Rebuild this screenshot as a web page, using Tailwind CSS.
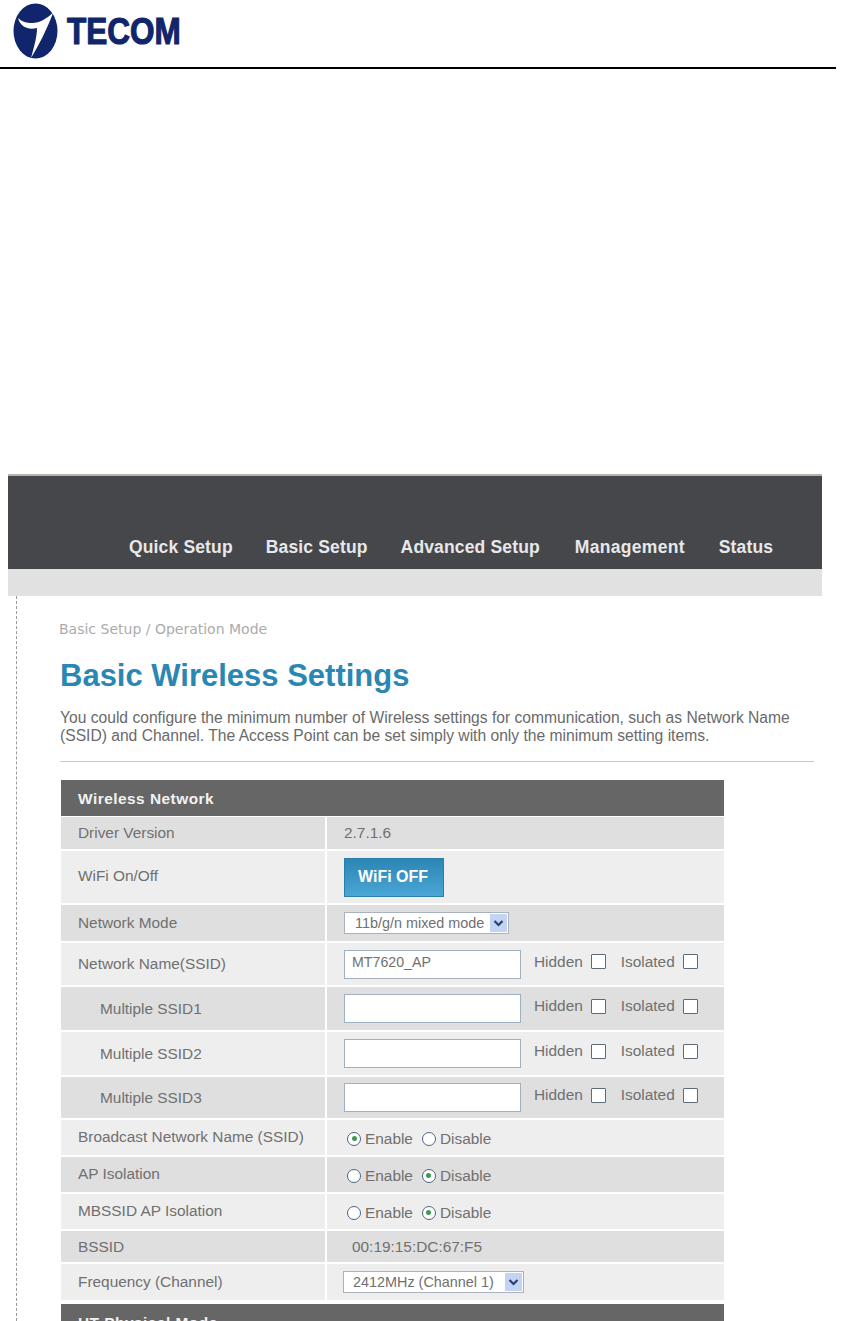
<!DOCTYPE html>
<html lang="en">
<head>
<meta charset="UTF-8">
<meta name="viewport" content="width=device-width,initial-scale=1">
<title>Basic Wireless Settings</title>
<script src="https://cdn.jsdelivr.net/npm/@tailwindcss/browser@4"></script>
</head>
<body class="bg-white font-['Liberation_Sans',Arial,sans-serif] text-[#707070] h-[1321px] overflow-hidden">

<!-- document header -->
<div class="h-[69px] w-[836px] border-b-2 border-black flex items-start">
  <svg class="ml-[13px] mt-[3px] w-[45px] h-[56px]" viewBox="0 0 45 56">
    <ellipse cx="22.5" cy="28" rx="22" ry="27.5" fill="#10256b"/>
    <path d="M5 15C9 19 14 20 19 20C27 20 34 15 40 10C34 26 26 42 18 55C21 44 24 34 24 25C16 27 8 25 5 15Z" fill="#fff"/>
  </svg>
  <span class="ml-[9px] mt-[12px] text-[31.5px] leading-[38px] font-bold text-[#10256b] scale-y-[1.15] [-webkit-text-stroke:1px_#10256b]">TECOM</span>
</div>

<!-- screenshot of router page -->
<div class="mt-[405px] ml-2 w-[814px]">
  <div class="h-[95px] bg-[#45474b] border-t-2 border-[#b5b3a5] flex items-end pb-[11px] pl-[121px] gap-[33px] text-[#e8e8ea] font-bold text-[17.5px] tracking-[0.15px] leading-[22px]">
    <span>Quick Setup</span>
    <span>Basic Setup</span>
    <span>Advanced Setup</span>
    <span class="ml-[2px] tracking-[0.3px]">Management</span>
    <span class="ml-px">Status</span>
  </div>
  <div class="h-[27px] bg-[#e1e1e1]"></div>

  <div class="border-l border-dashed border-[#9a9a9a] ml-2 pl-[42px] h-[725px] w-[806px]">
    <div class="pt-[25px] font-['DejaVu_Sans',sans-serif] text-[14px] leading-4 text-[#ababab]">Basic Setup / Operation Mode</div>
    <h1 class="mt-[21px] ml-px font-bold text-[31px] leading-[36px] text-[#2a87b4]">Basic Wireless Settings</h1>
    <p class="mt-[15px] ml-px text-[15.64px] leading-[18px] text-[#6a6a6a] w-[750px]">You could configure the minimum number of Wireless settings for communication, such as Network Name (SSID) and Channel. The Access Point can be set simply with only the minimum setting items.</p>
    <div class="mt-[16px] ml-px h-px bg-[#c9c9c9] w-[754px]"></div>

    <div class="mt-[18px] ml-[2px] w-[663px] grid grid-cols-[264px_397px] gap-x-[2px] text-[15.4px] leading-[18px]">
      <div class="col-span-2 h-[36px] bg-[#666666] text-[#f2f2f2] font-bold tracking-[0.5px] pl-[17px] pt-[2px] flex items-center">Wireless Network</div>

      <div class="mt-px h-[32px] bg-[#dfdfdf] pl-[17px] flex items-center">Driver Version</div>
      <div class="mt-px h-[32px] bg-[#dfdfdf] pl-[17px] flex items-center">2.7.1.6</div>

      <div class="mt-[2px] h-[52px] bg-[#eeeeee] pl-[17px] flex items-center pb-[2px]">WiFi On/Off</div>
      <div class="mt-[2px] h-[52px] bg-[#eeeeee] pl-[17px] flex items-center">
        <div class="w-[100px] h-[39px] bg-gradient-to-b from-[#2b86b5] to-[#4aa6d6] border border-[#2a7ea8] text-white font-bold text-[16px] pr-[2px] flex items-center justify-center">WiFi OFF</div>
      </div>

      <div class="mt-[2px] h-[36px] bg-[#dfdfdf] pl-[17px] flex items-center">Network Mode</div>
      <div class="mt-[2px] h-[36px] bg-[#dfdfdf] pl-[17px] flex items-center">
        <div class="w-[165px] h-[22px] bg-white border border-[#a9b2bd] flex items-center justify-between pl-[10px] pr-px text-[14.4px]">11b/g/n mixed mode
          <svg class="w-[17px] h-[18px]" viewBox="0 0 17 18"><rect width="17" height="18" fill="#c3d3f3"/><path d="M4.5 7l4 4 4-4" fill="none" stroke="#2a3f78" stroke-width="2.2"/></svg>
        </div>
      </div>

      <div class="mt-[2px] h-[42px] bg-[#eeeeee] pl-[17px] flex items-center">Network Name(SSID)</div>
      <div class="mt-[2px] h-[42px] bg-[#eeeeee] pl-[17px] flex items-center">
        <div class="w-[177px] h-[29px] bg-white border border-[#9fb0c0] pl-[7px] pb-[4px] flex items-center text-[14.2px]">MT7620_AP</div>
        <span class="ml-[13px] -mt-[5px]">Hidden</span><span class="ml-[8px] -mt-[5px] w-[15px] h-[15px] border border-[#5d6a78] rounded-[1px] bg-white"></span>
        <span class="ml-[15px] -mt-[5px]">Isolated</span><span class="ml-[8px] -mt-[5px] w-[15px] h-[15px] border border-[#5d6a78] rounded-[1px] bg-white"></span>
      </div>

      <div class="mt-[2px] h-[43px] bg-[#dfdfdf] pl-[39px] flex items-center">Multiple SSID1</div>
      <div class="mt-[2px] h-[43px] bg-[#dfdfdf] pl-[17px] flex items-center">
        <div class="w-[177px] h-[29px] bg-white border border-[#9fb0c0]"></div>
        <span class="ml-[13px] -mt-[5px]">Hidden</span><span class="ml-[8px] -mt-[5px] w-[15px] h-[15px] border border-[#5d6a78] rounded-[1px] bg-white"></span>
        <span class="ml-[15px] -mt-[5px]">Isolated</span><span class="ml-[8px] -mt-[5px] w-[15px] h-[15px] border border-[#5d6a78] rounded-[1px] bg-white"></span>
      </div>

      <div class="mt-[2px] h-[43px] bg-[#eeeeee] pl-[39px] flex items-center">Multiple SSID2</div>
      <div class="mt-[2px] h-[43px] bg-[#eeeeee] pl-[17px] flex items-center">
        <div class="w-[177px] h-[29px] bg-white border border-[#9fb0c0]"></div>
        <span class="ml-[13px] -mt-[5px]">Hidden</span><span class="ml-[8px] -mt-[5px] w-[15px] h-[15px] border border-[#5d6a78] rounded-[1px] bg-white"></span>
        <span class="ml-[15px] -mt-[5px]">Isolated</span><span class="ml-[8px] -mt-[5px] w-[15px] h-[15px] border border-[#5d6a78] rounded-[1px] bg-white"></span>
      </div>

      <div class="mt-[2px] h-[41px] bg-[#dfdfdf] pl-[39px] flex items-center">Multiple SSID3</div>
      <div class="mt-[2px] h-[41px] bg-[#dfdfdf] pl-[17px] flex items-center">
        <div class="w-[177px] h-[29px] bg-white border border-[#9fb0c0]"></div>
        <span class="ml-[13px] -mt-[5px]">Hidden</span><span class="ml-[8px] -mt-[5px] w-[15px] h-[15px] border border-[#5d6a78] rounded-[1px] bg-white"></span>
        <span class="ml-[15px] -mt-[5px]">Isolated</span><span class="ml-[8px] -mt-[5px] w-[15px] h-[15px] border border-[#5d6a78] rounded-[1px] bg-white"></span>
      </div>

      <div class="mt-[2px] h-[35px] bg-[#eeeeee] pl-[17px] flex items-center pb-[1px]">Broadcast Network Name (SSID)</div>
      <div class="mt-[2px] h-[35px] bg-[#eeeeee] pl-[20px] flex items-center pt-[2px]">
        <span class="w-[14px] h-[14px] rounded-full border border-[#4f6480] bg-white flex items-center justify-center"><span class="w-[5px] h-[5px] rounded-full bg-[#3f9a4e]"></span></span><span class="ml-[4px]">Enable</span>
        <span class="ml-[9px] w-[14px] h-[14px] rounded-full border border-[#4f6480] bg-white"></span><span class="ml-[4px]">Disable</span>
      </div>

      <div class="mt-[2px] h-[35px] bg-[#dfdfdf] pl-[17px] flex items-center pb-[1px]">AP Isolation</div>
      <div class="mt-[2px] h-[35px] bg-[#dfdfdf] pl-[20px] flex items-center pt-[2px]">
        <span class="w-[14px] h-[14px] rounded-full border border-[#4f6480] bg-white"></span><span class="ml-[4px]">Enable</span>
        <span class="ml-[9px] w-[14px] h-[14px] rounded-full border border-[#4f6480] bg-white flex items-center justify-center"><span class="w-[5px] h-[5px] rounded-full bg-[#3f9a4e]"></span></span><span class="ml-[4px]">Disable</span>
      </div>

      <div class="mt-[2px] h-[35px] bg-[#eeeeee] pl-[17px] flex items-center pb-[1px]">MBSSID AP Isolation</div>
      <div class="mt-[2px] h-[35px] bg-[#eeeeee] pl-[20px] flex items-center pt-[2px]">
        <span class="w-[14px] h-[14px] rounded-full border border-[#4f6480] bg-white"></span><span class="ml-[4px]">Enable</span>
        <span class="ml-[9px] w-[14px] h-[14px] rounded-full border border-[#4f6480] bg-white flex items-center justify-center"><span class="w-[5px] h-[5px] rounded-full bg-[#3f9a4e]"></span></span><span class="ml-[4px]">Disable</span>
      </div>

      <div class="mt-[2px] h-[31px] bg-[#dfdfdf] pl-[17px] flex items-center">BSSID</div>
      <div class="mt-[2px] h-[31px] bg-[#dfdfdf] pl-[25px] flex items-center">00:19:15:DC:67:F5</div>

      <div class="mt-[2px] h-[36px] bg-[#eeeeee] pl-[17px] flex items-center">Frequency (Channel)</div>
      <div class="mt-[2px] h-[36px] bg-[#eeeeee] pl-[16px] flex items-center">
        <div class="w-[181px] h-[22px] bg-white border border-[#a9b2bd] flex items-center justify-between pl-[9px] pr-px text-[14.4px]">2412MHz (Channel 1)
          <svg class="w-[17px] h-[18px]" viewBox="0 0 17 18"><rect width="17" height="18" fill="#c3d3f3"/><path d="M4.5 7l4 4 4-4" fill="none" stroke="#2a3f78" stroke-width="2.2"/></svg>
        </div>
      </div>

      <div class="mt-[4px] col-span-2 h-[36px] bg-[#666666] text-[#f2f2f2] font-bold tracking-[0.5px] pl-[17px] pt-[2px] flex items-center">HT Physical Mode</div>
    </div>
  </div>
</div>
</body>
</html>
